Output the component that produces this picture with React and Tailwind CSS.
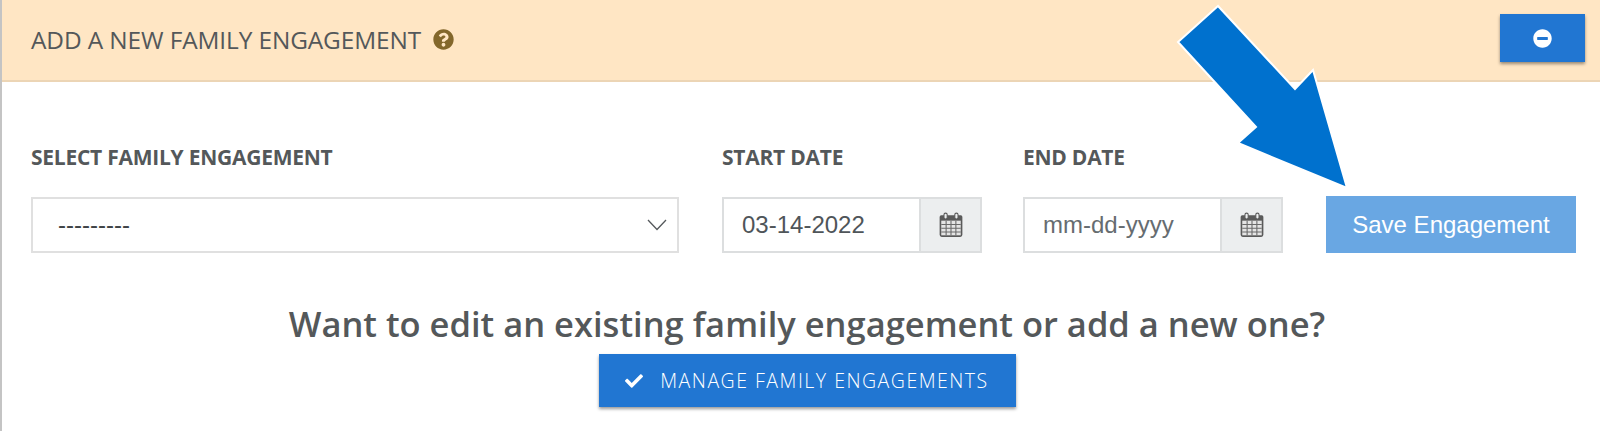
import React from "react";
import { FaQuestionCircle, FaMinusCircle, FaCheck } from "react-icons/fa";

function Cal() {
  return (
    <svg width="24" height="26" viewBox="0 0 22 24" aria-hidden="true">
      <path d="M2 3h18a1.5 1.5 0 0 1 1.5 1.5V21a2 2 0 0 1-2 2h-17a2 2 0 0 1-2-2V4.500A1.500 1.500 0 0 1 2 3z" fill="#5a5a5a" />
      <rect x="2" y="8" width="18" height="13.500" fill="#e4e4e4" />
      <path d="M2 11.500h18M2 15h18M2 18.500h18M6.500 8v13.500M11 8v13.500M15.500 8v13.500" stroke="#6a6a6a" strokeWidth="1" fill="none" />
      <rect x="4.500" y="1" width="3" height="5.500" rx="1.500" fill="#eceeef" stroke="#5a5a5a" strokeWidth="1" />
      <rect x="14.500" y="1" width="3" height="5.500" rx="1.500" fill="#eceeef" stroke="#5a5a5a" strokeWidth="1" />
    </svg>
  );
}

function DateInput({ value, placeholder }) {
  return (
    <div className="flex h-[56px] w-[260px] border-2 border-[#dcdedf] bg-white">
      <div
        className={`flex flex-1 items-center pl-[18px] font-['Liberation_Sans',sans-serif] text-[24px] ${placeholder ? "text-[#666c70]" : "text-[#4f5559]"}`}
      >
        {value}
      </div>
      <div className="flex w-[61px] items-center justify-center border-l-2 border-[#dcdedf] bg-[#eceeef]">
        <Cal />
      </div>
    </div>
  );
}

export default function App() {
  return (
    <div className="relative h-[431px] w-[1600px] overflow-hidden border-l-2 border-[#c4c4c4] bg-white font-['Open_Sans',sans-serif] text-[#54585a]">
      <div className="flex h-[82px] items-center justify-between border-b-2 border-[#ecd5b5] bg-[#ffe6c4] pl-[29px] pr-[15px]">
        <div className="flex items-center gap-[12px]">
          <h2 className="text-[24.400px] font-normal tracking-[-0.1px]">ADD A NEW FAMILY ENGAGEMENT</h2>
          <FaQuestionCircle className="text-[21px] text-[#83672b]" />
        </div>
        <button className="mb-[4px] flex h-[48px] w-[85px] items-center justify-center bg-[#2176d2] text-[19px] text-white shadow-[0_2px_3px_rgba(0,0,0,0.4)]">
          <FaMinusCircle />
        </button>
      </div>

      <div className="flex items-end pl-[29px] pt-[61px]">
        <div className="w-[648px]">
          <div className="mb-[26px] text-[21px] font-bold leading-[28px] tracking-[-0.25px]">SELECT FAMILY ENGAGEMENT</div>
          <div className="flex h-[56px] items-center justify-between border-2 border-[#e0e0e0] bg-white pl-[25px] pr-[10px]">
            <span className="font-['Liberation_Sans',sans-serif] text-[24px] text-[#3e4346]">---------</span>
            <svg width="20" height="12" viewBox="0 0 20 12" aria-hidden="true">
              <path d="M1 1l9 9.500L19 1" fill="none" stroke="#55595c" strokeWidth="1.300" />
            </svg>
          </div>
        </div>
        <div className="ml-[43px] w-[260px]">
          <div className="mb-[26px] text-[21px] font-bold leading-[28px] tracking-[-0.25px]">START DATE</div>
          <DateInput value="03-14-2022" />
        </div>
        <div className="ml-[41px] w-[260px]">
          <div className="mb-[26px] text-[21px] font-bold leading-[28px] tracking-[-0.25px]">END DATE</div>
          <DateInput value="mm-dd-yyyy" placeholder />
        </div>
        <button className="ml-[43px] h-[57px] w-[250px] bg-[#69a7e3] font-['Liberation_Sans',sans-serif] text-[24px] text-white">
          Save Engagement
        </button>
      </div>

      <div className="mt-[48px] flex flex-col items-center pl-[12px]">
        <h3 className="text-[34.500px] font-semibold leading-[46px]">Want to edit an existing family engagement or add a new one?</h3>
        <button className="mt-[7px] flex h-[53px] w-[417px] items-center justify-center gap-[17px] bg-[#2176d2] text-[19.500px] font-light tracking-[1.5px] text-white shadow-[0_2px_3px_rgba(0,0,0,0.4)]">
          <FaCheck className="text-[18px]" />
          MANAGE FAMILY ENGAGEMENTS
        </button>
      </div>

      <svg className="absolute left-[1168px] top-0" width="190" height="196" viewBox="1168 0 190 196" aria-hidden="true">
        <polygon
          points="1216,6 1176,42 1254,127 1236,143 1345,188 1311,70 1293,89"
          fill="#0071ce"
          stroke="#ffffff"
          strokeWidth="2"
        />
      </svg>
    </div>
  );
}
